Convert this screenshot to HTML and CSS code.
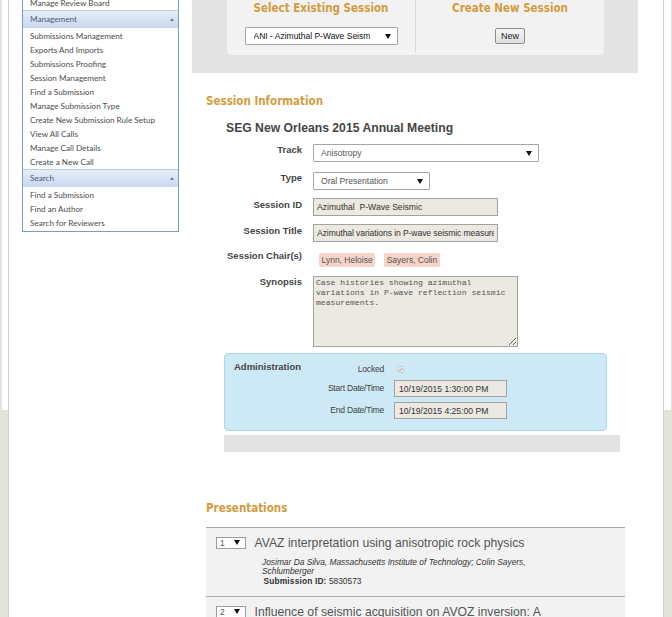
FILE: index.html
```html
<!DOCTYPE html>
<html lang="en">
<head>
<meta charset="utf-8">
<title>Session Management</title>
<link rel="stylesheet" href="styles.css">
</head>
<body>
<div class="page">
  <div class="container">
    <aside class="sidebar">
      <ul class="nav-list nav-top">
        <li>Manage Review Board</li>
      </ul>
      <div class="nav-head"><span>Management</span><i class="caret"></i></div>
      <ul class="nav-list">
        <li>Submissions Management</li>
        <li>Exports And Imports</li>
        <li>Submissions Proofing</li>
        <li>Session Management</li>
        <li>Find a Submission</li>
        <li>Manage Submission Type</li>
        <li>Create New Submission Rule Setup</li>
        <li>View All Calls</li>
        <li>Manage Call Details</li>
        <li>Create a New Call</li>
      </ul>
      <div class="nav-head"><span>Search</span><i class="caret"></i></div>
      <ul class="nav-list nav-last">
        <li>Find a Submission</li>
        <li>Find an Author</li>
        <li>Search for Reviewers</li>
      </ul>
    </aside>

    <main class="main">
      <div class="session-bar">
        <div class="session-panel">
          <div class="panel-col">
            <h2 class="panel-title">Select Existing Session</h2>
            <div class="select select-session"><span class="select-text">ANI - Azimuthal P-Wave Seismic</span><i class="arrow"></i></div>
          </div>
          <div class="panel-divider"></div>
          <div class="panel-col">
            <h2 class="panel-title">Create New Session</h2>
            <button class="btn" type="button">New</button>
          </div>
        </div>
      </div>

      <section class="info">
        <h3 class="section-title">Session Information</h3>
        <h4 class="meeting">SEG New Orleans 2015 Annual Meeting</h4>
        <div class="form">
          <div class="row row-track">
            <label class="label">Track</label>
            <div class="select select-track"><span class="select-text">Anisotropy</span><i class="arrow"></i></div>
          </div>
          <div class="row">
            <label class="label">Type</label>
            <div class="select select-type"><span class="select-text">Oral Presentation</span><i class="arrow"></i></div>
          </div>
          <div class="row row-input">
            <label class="label">Session ID</label>
            <input class="field field-wide" type="text" value="Azimuthal  P-Wave Seismic" readonly>
          </div>
          <div class="row row-input">
            <label class="label">Session Title</label>
            <input class="field field-wide field-tight" type="text" value="Azimuthal variations in P-wave seismic measurements" readonly>
          </div>
          <div class="row row-chairs">
            <label class="label">Session Chair(s)</label>
            <div class="tags">
              <span class="tag">Lynn, Heloise</span>
              <span class="tag">Sayers, Colin</span>
            </div>
          </div>
          <div class="row">
            <label class="label">Synopsis</label>
            <textarea class="synopsis" readonly>Case histories showing azimuthal variations in P-wave reflection seismic measurements.</textarea>
          </div>
        </div>

        <div class="admin">
          <div class="admin-title">Administration</div>
          <div class="admin-grid">
            <span class="admin-label">Locked</span>
            <span class="check"><svg width="5" height="5" viewBox="0 0 5 5"><path d="M0.6 2.6 L1.9 3.9 L4.4 1" fill="none" stroke="#9a9a9a" stroke-width="1"/></svg></span>
            <span class="admin-label">Start Date/Time</span>
            <input class="field field-date" type="text" value="10/19/2015 1:30:00 PM" readonly>
            <span class="admin-label">End Date/Time</span>
            <input class="field field-date" type="text" value="10/19/2015 4:25:00 PM" readonly>
          </div>
        </div>
        <div class="admin-footer"></div>
      </section>

      <section class="presentations">
        <h3 class="section-title">Presentations</h3>
        <ul class="pres-list">
          <li class="pres">
            <div class="pres-head">
              <div class="order"><span>1</span><i class="arrow"></i></div>
              <div class="pres-title">AVAZ interpretation using anisotropic rock physics</div>
            </div>
            <div class="authors">Josimar Da Silva, Massachusetts Institute of Technology; Colin Sayers, Schlumberger</div>
            <div class="subid"><b>Submission ID:</b> 5830573</div>
          </li>
          <li class="pres">
            <div class="pres-head">
              <div class="order"><span>2</span><i class="arrow"></i></div>
              <div class="pres-title">Influence of seismic acquisition on AVOZ inversion: A case study</div>
            </div>
            <div class="authors">Author list pending</div>
            <div class="subid"><b>Submission ID:</b> 5830574</div>
          </li>
        </ul>
      </section>
    </main>
  </div>
</div>
</body>
</html>
```

FILE: styles.css
```css
* { box-sizing: border-box; }

html, body {
  margin: 0;
  padding: 0;
}

body {
  background: #e3e3da;
  font-family: "Liberation Sans", Arial, sans-serif;
  color: #444;
}

/* white outer frame that stops at 410px, drawn as a background band */
.page {
  padding-left: 2px;
  width: 671px;
  background: linear-gradient(to bottom, #fff 0, #fff 410px, transparent 410px) 2px 0 / 669px 100% no-repeat;
}

.container {
  margin-left: 6px;
  width: 656px;
  min-height: 900px;
  background: #fff;
  border-left: 1px solid #d2d2d2;
  border-right: 1px solid #d2d2d2;
  display: flex;
  align-items: flex-start;
}

/* ---------- sidebar ---------- */
.sidebar {
  margin-left: 13px;
  margin-top: -5px;
  width: 157px;
  border: 1px solid #7d9cc4;
  background: #fff;
  font-family: Lato, "Open Sans", sans-serif;
  font-size: 8.15px;
}

.nav-list {
  list-style: none;
  margin: 0;
  padding: 1px 0 0;
}

.nav-list li {
  height: 14px;
  line-height: 14px;
  padding-left: 7px;
  color: #4c4c4c;
  white-space: nowrap;
}

.nav-top { padding: 0; }
.nav-last { padding-bottom: 1px; }

.nav-head {
  height: 18px;
  line-height: 17px;
  border-top: 1px solid #b9cbe2;
  background: linear-gradient(#e6eef9, #c7d8ee);
  padding: 0 4px 0 7px;
  color: #4a5b78;
  display: flex;
  justify-content: space-between;
  align-items: center;
}

.caret {
  width: 0;
  height: 0;
  border-left: 2.5px solid transparent;
  border-right: 2.5px solid transparent;
  border-bottom: 3px solid #6d7f9b;
}

/* ---------- main ---------- */
.main {
  margin-left: 13px;
  width: 446px;
}

.session-bar {
  height: 73px;
  background: #e3e3e3;
  padding: 0 34px 0 35px;
}

.session-panel {
  height: 55px;
  background: #f2f2f2;
  border-radius: 0 0 4px 4px;
  display: flex;
}

.panel-col {
  width: 188px;
  text-align: center;
}

.panel-divider {
  width: 1px;
  height: 52px;
  background: #d9d9d9;
}

.panel-title,
.section-title {
  margin: 0;
  font-family: "DejaVu Sans Condensed", "DejaVu Sans", sans-serif;
  font-stretch: condensed;
  font-weight: bold;
  color: #d49b3e;
}

.panel-title {
  padding-top: 1px;
  line-height: 14px;
  font-size: 11.5px;
}

.select {
  display: flex;
  align-items: center;
  justify-content: space-between;
  height: 18px;
  background: #fff;
  border: 1px solid #a6a6a6;
  border-radius: 1px;
  font-size: 8.6px;
  color: #555;
}

.select-text {
  white-space: nowrap;
  overflow: hidden;
}

.arrow {
  flex: none;
  width: 0;
  height: 0;
  border-left: 3px solid transparent;
  border-right: 3px solid transparent;
  border-top: 5px solid #111;
}

.select-session {
  width: 153px;
  margin: 12px auto 0;
  padding: 0 6px 0 8px;
  color: #111;
  font-size: 8.5px;
}

.select-session .select-text { width: 116px; text-align: left; }

.btn {
  margin-top: 13px;
  width: 30px;
  height: 16px;
  padding: 0;
  border: 1px solid #8e8e8e;
  border-radius: 2px;
  background: linear-gradient(#f6f6f6, #dddddd);
  font-family: "Liberation Sans", Arial, sans-serif;
  font-size: 9px;
  color: #222;
}

/* ---------- session info ---------- */
.info { padding-left: 14px; }

.section-title {
  margin-top: 21px;
  line-height: 14px;
  font-size: 11.5px;
}

.meeting {
  margin: 13px 0 0;
  padding-left: 20px;
  line-height: 15px;
  font-size: 12.2px;
  font-weight: bold;
  color: #454545;
}

.form {
  margin-top: 8px;
  display: flex;
  flex-direction: column;
  gap: 8px;
}

.row {
  display: flex;
  align-items: flex-start;
}

.row-track { margin-bottom: 2px; }

.label {
  flex: none;
  width: 96px;
  margin-right: 11px;
  text-align: right;
  font-size: 9.5px;
  line-height: 11px;
  font-weight: bold;
  color: #454545;
}

.row-input .label { padding-top: 1px; }

.select-track {
  width: 226px;
  padding: 0 6px 0 7px;
}

.select-type {
  width: 117px;
  padding: 0 6px 0 7px;
}

.field {
  display: block;
  height: 18px;
  margin: 0;
  padding: 0 3px;
  border: 1px solid #a2a2a2;
  border-radius: 0;
  background: #ebe9e1;
  font-family: "Liberation Sans", Arial, sans-serif;
  font-size: 8.6px;
  color: #333;
  outline: none;
}

.field-wide { width: 185px; }
.field-tight { letter-spacing: -0.1px; }

.row-chairs { height: 18px; }

.tags {
  display: flex;
  gap: 9px;
  margin: 2.5px 0 0 6px;
}

.tag {
  height: 14px;
  line-height: 14px;
  padding: 0 2.5px;
  background: #f7d4c8;
  border-radius: 2px;
  font-size: 8.5px;
  color: #555;
  white-space: nowrap;
}

.synopsis {
  display: block;
  width: 205px;
  height: 71px;
  margin: 0;
  padding: 1px 2px;
  border: 1px solid #a2a2a2;
  background: #ebe9e1;
  font-family: "Liberation Mono", "Courier New", monospace;
  font-size: 8.1px;
  line-height: 10px;
  color: #555;
  resize: both;
  outline: none;
  overflow: hidden;
}

/* ---------- administration ---------- */
.admin {
  margin: 6px 0 0 18px;
  width: 383px;
  padding: 7px 9px 11px;
  background: #cde9f5;
  border: 1px solid #a8d4ef;
  border-radius: 4px;
  display: flex;
  align-items: flex-start;
}

.admin-title {
  width: 90px;
  font-size: 9.5px;
  line-height: 11px;
  font-weight: bold;
  color: #454545;
}

.admin-grid {
  margin-top: 3px;
  display: grid;
  grid-template-columns: 60px auto;
  column-gap: 10px;
  row-gap: 5px;
  align-items: center;
}

.admin-label {
  text-align: right;
  font-size: 8.6px;
  line-height: 11px;
  letter-spacing: -0.25px;
  color: #444;
  white-space: nowrap;
}

.check {
  margin-left: 3px;
  width: 7px;
  height: 7px;
  border: 1px solid #c6cfd4;
  border-radius: 1px;
  background: #e4e8ea;
  display: flex;
  align-items: center;
  justify-content: center;
}

.field-date {
  width: 113px;
  height: 17px;
  padding: 0 4px;
}

.admin-footer {
  margin: 4px 0 0 18px;
  width: 396px;
  height: 17px;
  background: #e3e3e3;
}

/* ---------- presentations ---------- */
.presentations { padding-left: 14px; }

.presentations .section-title { margin-top: 49px; }

.pres-list {
  list-style: none;
  margin: 12px 0 0;
  padding: 0;
  width: 419px;
}

.pres {
  border-top: 1px solid #a9a9a9;
  background: #f2f2f2;
  padding: 8px 0 10px 9.5px;
}

.pres-head {
  display: flex;
  align-items: flex-start;
}

.order {
  flex: none;
  margin-top: 0.5px;
  width: 30px;
  height: 12px;
  background: #fff;
  border: 1px solid #9c9c9c;
  padding: 0 5px 0 3.5px;
  display: flex;
  align-items: center;
  justify-content: space-between;
  font-size: 8.5px;
  color: #555;
}

.pres-title {
  margin-left: 9px;
  width: 300px;
  font-size: 12.2px;
  line-height: 14px;
  color: #555;
}

.authors {
  margin: 8px 0 0 46.5px;
  width: 290px;
  font-size: 8.4px;
  line-height: 9px;
  font-style: italic;
  color: #333;
}

.subid {
  margin-left: 48px;
  font-size: 8.4px;
  line-height: 10px;
  color: #333;
}

.subid b { letter-spacing: 0.15px; }
```
